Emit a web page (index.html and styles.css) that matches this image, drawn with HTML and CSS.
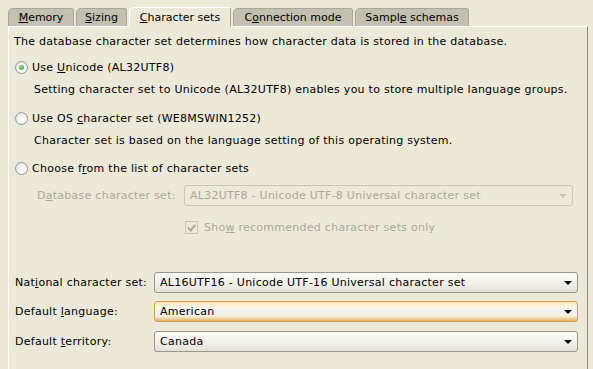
FILE: index.html
```html
<!DOCTYPE html>
<html>
<head lang="en">
    <meta charset="UTF-8">
    <title>Character sets</title>
    <link rel="stylesheet" href="styles.css">
</head>
<body>
<div class="tabs">
    <span class="tab t_mem"><u>M</u>emory</span><span class="tab t_size"><u>S</u>izing</span><span class="tab t_char active"><u>C</u>haracter sets</span><span class="tab t_conn">C<u>o</u>nnection mode</span><span class="tab t_samp">Sampl<u>e</u> schemas</span>
</div>
<div class="panel">
    <p class="intro">The database character set determines how character data is stored in the database.</p>

    <label class="radio_row first"><i class="radio checked"></i><span>Use <u>U</u>nicode (AL32UTF8)</span></label>
    <p class="desc">Setting character set to Unicode (AL32UTF8) enables you to store multiple language groups.</p>

    <label class="radio_row"><i class="radio"></i><span>Use OS <u>c</u>haracter set (WE8MSWIN1252)</span></label>
    <p class="desc">Character set is based on the language setting of this operating system.</p>

    <label class="radio_row third"><i class="radio"></i><span>Choose f<u>r</u>om the list of character sets</span></label>

    <div class="sub_row disabled">
        <span class="sub_label">D<u>a</u>tabase character set:</span>
        <div class="select dis">AL32UTF8 - Unicode UTF-8 Universal character set<i class="arrow"></i></div>
    </div>
    <label class="check_row disabled"><i class="check"></i><span>Sho<u>w</u> recommended character sets only</span></label>

    <div class="field_row first">
        <span class="field_label">Nat<u>i</u>onal character set:</span>
        <div class="select">AL16UTF16 - Unicode UTF-16 Universal character set<i class="arrow"></i></div>
    </div>
    <div class="field_row">
        <span class="field_label">Default <u>l</u>anguage:</span>
        <div class="select focus">American<i class="arrow"></i></div>
    </div>
    <div class="field_row last">
        <span class="field_label">Default <u>t</u>erritory:</span>
        <div class="select">Canada<i class="arrow"></i></div>
    </div>
</div>
</body>
</html>
```

FILE: styles.css
```css
* {
    margin: 0;
    padding: 0;
}

body {
    background: #ece9d8;
    font-family: "DejaVu Sans", Verdana, sans-serif;
    font-size: 11px;
    letter-spacing: 0.26px;
    color: #000;
    overflow: hidden;
}

u {
    text-decoration: underline;
}

.tabs {
    display: flex;
    align-items: flex-end;
    padding: 7px 0 0 8px;
    height: 19px;
}

.tab {
    display: inline-block;
    box-sizing: border-box;
    height: 18px;
    line-height: 17px;
    text-align: center;
    letter-spacing: 0;
    margin-right: 2px;
    background: #c3c0b1;
    border: 1px solid #a9a695;
    border-bottom: none;
    border-radius: 5px 3px 0 0;
    color: #000;
}

.t_mem { width: 66px; }
.t_size { width: 51px; }
.t_char { width: 102px; }
.t_conn { width: 120px; }
.t_samp { width: 114px; }

.tab.active {
    height: 20px;
    line-height: 19px;
    background: #ece9d8;
    border-color: #fff;
    border-right-color: #a9a695;
    position: relative;
    top: 1px;
}

.panel {
    margin-left: 8px;
    width: 573px;
    height: 343px;
    border-top: 1px solid #fff;
    border-left: 1px solid #fff;
    border-right: 1px solid #8a8778;
    padding: 7px 0 0 5px;
}

.intro {
    height: 16px;
    line-height: 16px;
}

.radio_row {
    display: flex;
    align-items: center;
    height: 16px;
    margin-top: 12px;
    padding-left: 1px;
}

.radio_row.first {
    margin-top: 9px;
}

.radio_row.third {
    margin-top: 11px;
}

.radio {
    display: inline-block;
    width: 11px;
    height: 11px;
    margin-right: 4px;
    border: 1px solid #8a98a6;
    border-radius: 50%;
    background: radial-gradient(circle at 65% 70%, #fff 20%, #e4e1d6 90%);
    position: relative;
}

.radio.checked::after {
    content: "";
    position: absolute;
    left: 3px;
    top: 3px;
    width: 5px;
    height: 5px;
    border-radius: 50%;
    background: radial-gradient(circle at 40% 40%, #8fd88f, #2e9a3a);
}

.desc {
    margin-top: 7px;
    padding-left: 20px;
    height: 16px;
    line-height: 16px;
}

.sub_row {
    display: flex;
    align-items: center;
    margin-top: 9px;
    padding-left: 23px;
}

.sub_label {
    width: 147px;
}

.disabled {
    color: #aca899;
}

.select {
    position: relative;
    flex: 1;
    height: 21px;
    line-height: 20px;
    padding-left: 5px;
    border: 1px solid #9a9888;
    border-radius: 3px;
    background: linear-gradient(#fafaf7, #f0efe8 60%, #e3e1d8);
    box-sizing: border-box;
    color: #000;
    margin-right: 9px;
}

.select.dis {
    margin-right: 14px;
    color: #aca899;
    background: #ece9d8;
    border-color: #c9c6b5;
}

.select.focus {
    border-color: #d0a050;
    background: linear-gradient(#fde6b4, #fdf6e5 25%, #eef3f0 50%, #f6f1dd 75%, #e8b060);
}

.arrow {
    position: absolute;
    right: 5px;
    top: 8px;
    width: 0;
    height: 0;
    border-left: 4px solid transparent;
    border-right: 4px solid transparent;
    border-top: 4px solid #000;
}

.select.dis .arrow {
    border-top-color: #c9c6b5;
}

.check_row {
    display: flex;
    align-items: center;
    margin-top: 13px;
    padding-left: 171px;
    height: 16px;
}

.check {
    display: inline-block;
    width: 11px;
    height: 11px;
    border: 1px solid #c9c6b5;
    margin-right: 6px;
    position: relative;
}

.check::after {
    content: "";
    position: absolute;
    left: 3px;
    top: 1px;
    width: 3px;
    height: 6px;
    border: solid #aca899;
    border-width: 0 2px 2px 0;
    transform: rotate(40deg);
}

.field_row {
    display: flex;
    align-items: center;
    margin-top: 8px;
}

.field_row.first {
    margin-top: 37px;
}

.field_row.last {
    margin-top: 9px;
}

.field_label {
    width: 139px;
    padding-left: 1px;
}
```
